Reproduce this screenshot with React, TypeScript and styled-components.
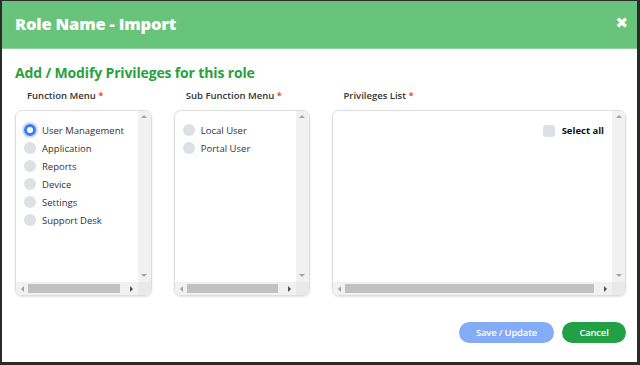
import React from 'react'
import styled, { createGlobalStyle } from 'styled-components'

const GlobalStyle = createGlobalStyle`
  html, body {
    margin: 0;
    padding: 0;
    background: #ffffff;
  }
  body {
    font-family: "Open Sans", "Liberation Sans", sans-serif;
  }
`

const functionMenu = ['User Management', 'Application', 'Reports', 'Device', 'Settings', 'Support Desk']
const subFunctionMenu = ['Local User', 'Portal User']

const Frame = styled.div`
  box-sizing: border-box;
  width: 640px;
  height: 365px;
  border-top: 1px solid #2b2b2b;
  border-left: 2px solid #2b2b2b;
  border-right: 3px solid #2b2b2b;
  border-bottom: 3px solid #2b2b2b;
  display: flex;
  flex-direction: column;
  background: #fff;
`

const Header = styled.div`
  box-sizing: border-box;
  height: 48px;
  flex-shrink: 0;
  background: #68c47a;
  border-bottom: 1px solid #8fd39c;
  display: flex;
  align-items: center;
  justify-content: space-between;
  padding: 0 9px 3px 13px;
`

const Title = styled.h1`
  margin: 0;
  color: #fff;
  font-size: 16.5px;
  font-weight: 800;
  letter-spacing: -0.2px;
`

const Close = styled.span`
  color: #fff;
  font-size: 15px;
  font-weight: 700;
  line-height: 1;
  font-family: "DejaVu Sans", sans-serif;
`

const Body = styled.div`
  flex: 1;
  display: flex;
  flex-direction: column;
  padding: 15px 11px 0 13px;
`

const SubTitle = styled.h2`
  margin: 0;
  color: #2aa03f;
  font-size: 14px;
  font-weight: 700;
  letter-spacing: -0.15px;
  line-height: 18px;
`

const Columns = styled.div`
  display: flex;
  gap: 22px;
  margin-top: 8px;
`

const Column = styled.div<{ $w: number }>`
  width: ${p => p.$w}px;
  display: flex;
  flex-direction: column;
`

const Label = styled.div`
  font-size: 9.5px;
  font-weight: 600;
  color: #333;
  padding-left: 12px;
  line-height: 12px;
  margin-bottom: 8px;
  span { color: #e53935; }
`

const ListBox = styled.div`
  height: 186px;
  box-sizing: border-box;
  border: 1px solid #dedede;
  border-radius: 7px;
  box-shadow: 0 1px 2px rgba(0, 0, 0, 0.12);
  overflow: hidden;
  display: grid;
  grid-template-columns: 1fr 13px;
  grid-template-rows: 1fr 13px;
`

const Content = styled.div`
  padding: 13px 0 0 7px;
  display: flex;
  flex-direction: column;
  gap: 6px;
`

const Item = styled.div`
  display: flex;
  align-items: center;
  gap: 6px;
  height: 12px;
  font-size: 9.5px;
  color: #333;
`

const Radio = styled.span<{ $on?: boolean }>`
  box-sizing: border-box;
  width: 12px;
  height: 12px;
  border-radius: 50%;
  background: ${p => (p.$on ? '#fff' : '#dde0e5')};
  border: ${p => (p.$on ? '3.5px solid #3d7cf0' : 'none')};
  box-shadow: ${p => (p.$on ? '0 0 0 2px #cfdcfb' : 'none')};
  margin-left: 1px;
`

const VBar = styled.div`
  background: #f1f1f1;
  display: flex;
  flex-direction: column;
  justify-content: space-between;
  align-items: center;
  padding: 4px 0 5px;
`

const HBar = styled.div`
  background: #f1f1f1;
  display: flex;
  align-items: center;
  gap: 4px;
  padding: 0 5px;
`

const Thumb = styled.div`
  flex: 1;
  height: 9px;
  background: #c1c1c1;
  margin-right: 6px;
`

const Corner = styled.div`
  background: #e9e9e9;
`

const Arrow = styled.span<{ $dir: 'up' | 'down' | 'left' | 'right'; $dark?: boolean }>`
  width: 0;
  height: 0;
  border: 3px solid transparent;
  ${p => {
    const c = p.$dark ? '#505050' : '#a3a3a3'
    switch (p.$dir) {
      case 'up': return `border-bottom-color: ${c}; border-top-width: 0;`
      case 'down': return `border-top-color: ${c}; border-bottom-width: 0;`
      case 'left': return `border-right-color: ${c}; border-left-width: 0;`
      default: return `border-left-color: ${c}; border-right-width: 0;`
    }
  }}
`

const SelectAll = styled.div`
  align-self: start;
  display: flex;
  justify-content: flex-end;
  align-items: center;
  gap: 7px;
  padding: 13px 8px 0 0;
  font-size: 9.5px;
  font-weight: 700;
  color: #111;
`

const Check = styled.span`
  width: 12px;
  height: 12px;
  border-radius: 3px;
  background: #dde0e5;
`

const Footer = styled.div`
  display: flex;
  justify-content: flex-end;
  gap: 8px;
  margin-top: 26px;
`

const Button = styled.button<{ $variant: 'save' | 'cancel' }>`
  height: 21px;
  border: none;
  border-radius: 11px;
  padding: 0;
  width: ${p => (p.$variant === 'save' ? 95 : 64)}px;
  background: ${p => (p.$variant === 'save' ? '#84acf6' : '#21a045')};
  color: #fff;
  font-family: "Open Sans", "Liberation Sans", sans-serif;
  font-size: 9.5px;
  font-weight: 600;
  letter-spacing: -0.2px;
`

const Scrollers = () => (
  <>
    <VBar>
      <Arrow $dir="up" />
      <Arrow $dir="down" />
    </VBar>
    <HBar>
      <Arrow $dir="left" />
      <Thumb />
      <Arrow $dir="right" $dark />
    </HBar>
    <Corner />
  </>
)

const App = () => {
  return (
    <Frame>
      <GlobalStyle />
      <Header>
        <Title>Role Name - Import</Title>
        <Close>✖</Close>
      </Header>
      <Body>
        <SubTitle>Add / Modify Privileges for this role</SubTitle>
        <Columns>
          <Column $w={137}>
            <Label>Function Menu <span>*</span></Label>
            <ListBox>
              <Content>
                {functionMenu.map((f, i) => (
                  <Item key={f}>
                    <Radio $on={i === 0} />
                    {f}
                  </Item>
                ))}
              </Content>
              <Scrollers />
            </ListBox>
          </Column>
          <Column $w={136}>
            <Label>Sub Function Menu <span>*</span></Label>
            <ListBox>
              <Content>
                {subFunctionMenu.map(f => (
                  <Item key={f}>
                    <Radio />
                    {f}
                  </Item>
                ))}
              </Content>
              <Scrollers />
            </ListBox>
          </Column>
          <Column $w={295}>
            <Label>Privileges List <span>*</span></Label>
            <ListBox>
              <SelectAll>
                <Check />
                Select all
              </SelectAll>
              <Scrollers />
            </ListBox>
          </Column>
        </Columns>
        <Footer>
          <Button $variant="save">Save / Update</Button>
          <Button $variant="cancel">Cancel</Button>
        </Footer>
      </Body>
    </Frame>
  )
}

export default App
